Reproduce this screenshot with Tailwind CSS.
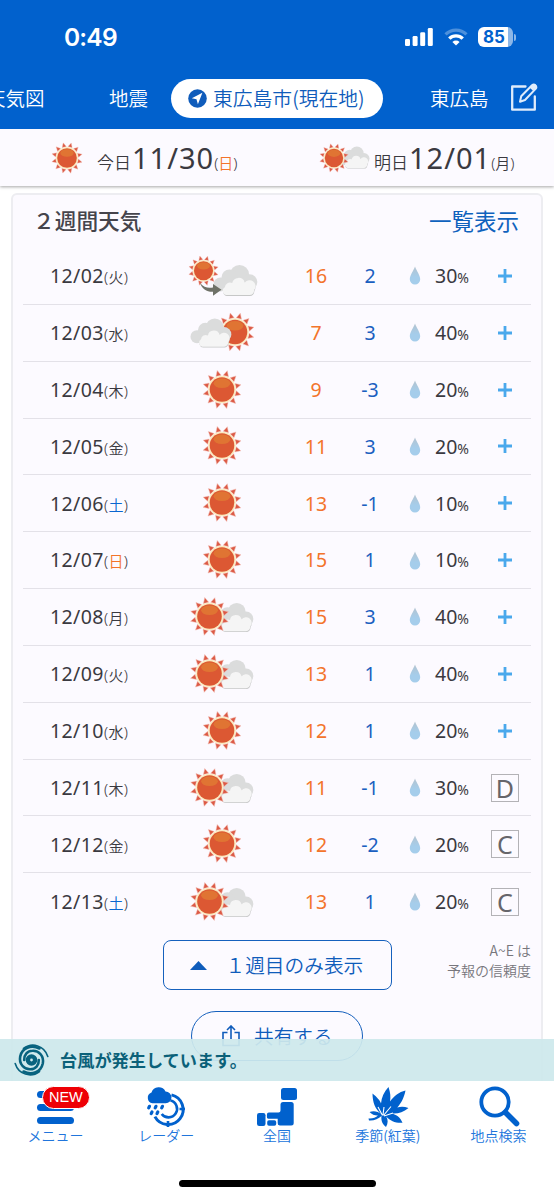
<!DOCTYPE html>
<html lang="ja">

<head>
    <meta charset="UTF-8">
    <meta name="viewport" content="width=device-width, initial-scale=1.0">
    <title>2週間天気</title>
    <script src="https://cdn.jsdelivr.net/npm/@tailwindcss/browser@4"></script>
    <style>
        body {
            font-family: 'Noto Sans', 'Noto Sans CJK JP', sans-serif;
        }

        .jp {
            font-family: 'Noto Sans CJK JP', sans-serif;
        }
    </style>
</head>

<body class="w-[554px] h-[1199px] overflow-hidden bg-white text-[#3a3940] flex flex-col">
    <!-- shared weather icons -->
    <svg class="absolute w-0 h-0">
        <defs>
            <linearGradient id="dropFill" x1="0" y1="0" x2="0" y2="1">
                <stop offset="0" stop-color="#b4c3cf" />
                <stop offset="0.6" stop-color="#a5cdeb" />
            </linearGradient>
        </defs>
        <symbol id="sun" viewBox="-20.5 -20.5 41 41">
            <g id="rays"></g>
            <circle r="14.2" fill="#fbeac0" />
            <circle r="12.6" fill="#dc5833" />
            <ellipse cy="-6.4" rx="8.6" ry="4.9" fill="#e07433" />
        </symbol>
        <symbol id="cloud" viewBox="0 0 45 32">
            <g fill="#dbdcdc">
                <circle cx="26.5" cy="10" r="9.6" />
                <circle cx="36.5" cy="17.5" r="7.8" />
                <circle cx="16.5" cy="13" r="8" />
                <circle cx="7.5" cy="20" r="7" />
                <path d="M7 14h30v12H7z" />
            </g>
            <path d="M14 31.5a4.2 4.2 0 0 1-1.8-7.8 5.2 5.2 0 0 1 7.4-4.2 6.5 6.5 0 0 1 12.6-.6 6 6 0 0 1 9.2 7.5c-.2 3.3-2 5.1-4.6 5.1z" fill="#c6c7c7" />
            <path d="M13.4 30.6a4.2 4.2 0 0 1-1.6-7.8 5.2 5.2 0 0 1 7.4-4.2 6.5 6.5 0 0 1 12.6-.6 6 6 0 0 1 9.4 7.5c-.2 3.3-2 5.1-4.6 5.1z" fill="#f5f5f5" />
        </symbol>
        <symbol id="drop" viewBox="0 0 12 19">
            <path d="M6 .5C7.6 5 11.2 9.3 11.2 13.3a5.2 5.2 0 0 1-10.4 0C.8 9.3 4.4 5 6 .5z" fill="url(#dropFill)" />
        </symbol>
    </svg>

    <header class="h-[129px] shrink-0 bg-[#0161cd] text-white flex flex-col overflow-hidden">
        <div class="h-[74px] pl-16 pr-[38px] flex items-center justify-between">
            <span class="text-[24.5px] leading-none font-semibold font-['Inter'] tracking-[-0.8px]">0:49</span>
            <div class="flex items-center">
                <svg class="w-7 h-[18px]" viewBox="0 0 28 18" fill="#fff">
                    <rect x="0" y="11" width="5" height="7" rx="1.3" />
                    <rect x="7.6" y="8" width="5" height="10" rx="1.3" />
                    <rect x="15.2" y="4.2" width="5" height="13.8" rx="1.3" />
                    <rect x="22.8" y="0" width="5" height="18" rx="1.3" />
                </svg>
                <svg class="w-6 h-[18px] ml-[11px] mr-[10px]" viewBox="0 0 24 18" fill="none" stroke="#fff">
                    <path d="M1.5 6.4a15 15 0 0 1 21 0" stroke-width="3.2" opacity=".3" />
                    <path d="M5.3 10.6a9.5 9.5 0 0 1 13.4 0" stroke-width="3.4" />
                    <path d="M12 17.6l-3.6-3.7a5.2 5.2 0 0 1 7.2 0z" fill="#fff" stroke="none" />
                </svg>
                <div class="w-[35px] h-5 rounded-md bg-[linear-gradient(90deg,#fff_87%,#8cb7e8_87%)] text-[#0161cd] font-['Inter'] font-bold text-[17px] leading-5 pl-[5px]">85</div>
                <div class="w-[2px] h-[7px] ml-[1px] rounded-r bg-[#8cb7e8]"></div>
            </div>
        </div>
        <div class="jp h-[48px] flex items-center text-[19.5px] leading-none whitespace-nowrap font-[350]">
            <span class="w-[109px] -ml-[14px] shrink-0">天気図</span>
            <span class="w-[75px] shrink-0 ml-[14px]">地震</span>
            <div class="w-[212px] h-[39px] -ml-[13px] rounded-full bg-white text-[#0f5cbb] text-[19.8px] flex items-center pl-[17px] gap-[6px] shrink-0">
                <svg class="w-[19px] h-[19px] shrink-0" viewBox="0 0 19 19">
                    <circle cx="9.5" cy="9.5" r="9.3" fill="#0f5cbb" />
                    <path d="M14.4 3.8L3.8 9.3l4.7.9 1.4 5.1z" fill="#fff" />
                </svg>
                <span>東広島市(現在地)</span>
            </div>
            <span class="w-[80px] ml-[47px] shrink-0">東広島</span>
            <svg class="w-[28px] h-[30px] shrink-0 mb-[3px]" viewBox="0 0 28 30" fill="none" stroke="#dfecfb" stroke-width="2.3">
                <path d="M15.5 4.5H2.2v23.2h22.6V14.5" stroke-linejoin="round" stroke-linecap="round" />
                <path d="M10 19.7l1.2-5.4L22 3.2c2.5-2 5.6 1.2 3.6 3.7L15 18z" stroke-linejoin="round" stroke-width="2" />
                <path d="M19.5 5.6l3.7-3.4c2-.9 4 1 3.3 3l-3.5 3.6z" fill="#dfecfb" stroke="none" />
            </svg>
        </div>
    </header>

    <main class="relative h-[952px] shrink-0 overflow-hidden bg-white">
        <section class="relative h-[57px] bg-[#fcfaff] shadow-[0_1px_3px_rgba(0,0,0,0.35)] grid grid-cols-2">
            <div class="flex items-center pl-[51px]">
                <svg class="w-8 h-8"><use href="#sun" /></svg>
                <p class="flex items-baseline ml-[14px] leading-none font-[350]">
                    <span class="text-[17px]">今日</span>
                    <span class="text-[29px] ml-[1px] font-normal tracking-[1px]">11/30</span>
                    <span class="text-[15px]">(<span class="text-[#f3742b]">日</span>)</span>
                </p>
            </div>
            <div class="flex items-center pl-[42px]">
                <div class="w-[51px] h-8 flex items-center">
                    <svg class="relative z-10 w-[30px] h-[30px] shrink-0"><use href="#sun" /></svg>
                    <svg class="w-8 h-[23px] -ml-[11px] shrink-0"><use href="#cloud" /></svg>
                </div>
                <p class="flex items-baseline ml-[4px] leading-none font-[350]">
                    <span class="text-[17px]">明日</span>
                    <span class="text-[29px] ml-[1px] font-normal tracking-[1px]">12/01</span>
                    <span class="text-[15px]">(月)</span>
                </p>
            </div>
        </section>

        <section class="mt-[7px] mx-[11px] h-[900px] rounded-md border-2 border-[#ededf1] bg-[#fcfaff] px-[10px]">
            <div class="jp h-[51px] mb-[2px] pl-[10px] pr-3 flex items-center justify-between leading-none">
                <h2 class="text-[21.7px] pb-[2px] font-medium text-[#45444c]">２週間天気</h2>
                <a class="text-[22.5px] pb-[1px] text-[#0f62bd]">一覧表示</a>
            </div>
            <div id="forecast"></div>
            <div class="relative flex justify-center pt-[10px]">
                <button class="jp w-[229px] h-[50px] border-[1.5px] border-[#1560bd] rounded-lg text-[#0f5cbb] text-[19.7px] leading-none font-[350] whitespace-nowrap flex items-center pl-[26px] gap-[19px]">
                    <svg class="w-[17px] h-[9px] shrink-0" viewBox="0 0 17 9"><path d="M0 9L8.5 0 17 9z" fill="#0f5cbb" /></svg>
                    １週目のみ表示
                </button>
                <p class="jp absolute right-0 top-[10px] text-right text-[14px] leading-[20px] text-[#77767c] font-[350]">A~E は<br>予報の信頼度</p>
            </div>
            <div class="flex justify-center mt-[21px]">
                <button class="jp w-[172px] h-[50px] border-[1.5px] border-[#1560bd] rounded-full text-[#0f5cbb] text-[19.7px] leading-none font-[350] flex items-center pl-[30px] gap-[14px]">
                    <svg class="w-[18px] h-[22px]" viewBox="0 0 18 22" fill="none" stroke="#0f5cbb" stroke-width="1.6">
                        <path d="M5.5 7.5H1v13h16v-13h-4.5M9 14V1.5M5 5l4-4 4 4" />
                    </svg>
                    共有する
                </button>
            </div>
        </section>

        <div class="absolute bottom-0 left-0 w-full h-[42px] bg-[#cee8ec]/93 flex items-center gap-[11px] pl-[14px]">
            <svg class="w-[35px] h-[34px]" viewBox="0 0 35 34" fill="none" stroke="#09637f" stroke-linecap="round">
                <circle cx="17.5" cy="17" r="3.6" stroke-width="4.4" />
                <g id="arm">
                    <path d="M33.8 13.5C30.5 2.5 18 -1 9.5 5.5" stroke-width="1.6" />
                    <path d="M25.5 5.5C17 1.5 8 5 6.2 13.5 4.8 21 10 26.5 16.500 26.200c5 0 8.500-4 8.300-9.200" stroke-width="2.600" />
                </g>
                <use href="#arm" transform="rotate(180 17.5 17)" />
            </svg>
            <p class="jp text-[17.2px] leading-none font-bold text-[#0b6179]">台風が発生しています。</p>
        </div>
    </main>

    <nav class="jp h-[118px] shrink-0 bg-white relative grid grid-cols-5 text-[14px] leading-none text-[#2075dc] font-[350]">
        <a class="flex flex-col items-center pt-[5px]">
            <div class="relative w-[37px] h-[42px] flex flex-col justify-center gap-[6px]">
                <div class="h-[7px] rounded-full bg-[#0161cd]"></div>
                <div class="h-[7px] rounded-full bg-[#0161cd]"></div>
                <div class="h-[7px] rounded-full bg-[#0161cd]"></div>
                <span class="absolute left-[5px] top-0 w-[48px] h-[23px] rounded-full border border-white bg-[#ee0005] text-white text-[14.5px] leading-[21px] text-center font-normal font-['Liberation_Sans']">NEW</span>
            </div>
            <span>メニュー</span>
        </a>
        <a class="flex flex-col items-center pt-[5px]">
            <svg class="w-[42px] h-[42px]" viewBox="0 0 42 42" fill="none" stroke="#0161cd">
                <path d="M26.5 8.9a15 15 0 1 1-16.6 21.7" stroke-width="3" />
                <path d="M25.5 14.6a8.5 8.5 0 1 1-8.8 13.3" stroke-width="2.6" />
                <path d="M34.5 23h5.5M23 35v6" stroke-width="2.6" />
                <path d="M7.5 17.3A5.6 5.6 0 0 1 6.5 6.5 7.6 7.6 0 0 1 20.5 5.5a5.9 5.9 0 0 1 .2 11.8z" fill="#0161cd" stroke="none" />
                <path d="M4.5 20.3l-.8 1.6M11 20.3l-.8 1.6M17.500 20.300l-.8 1.600M7 26l-.8 1.600M12.800 26l-.8 1.600" stroke-width="3.200" stroke-linecap="round" />
            </svg>
            <span>レーダー</span>
        </a>
        <a class="flex flex-col items-center pt-[5px]">
            <svg class="w-[42px] h-[42px]" viewBox="0 0 42 42" fill="#0161cd">
                <rect x="25" y="2" width="16" height="12" rx="2.5" />
                <path d="M27.5 16h7.7a2.5 2.5 0 0 1 2.5 2.5v18.500a2.500 2.500 0 0 1-2.500 2.500H23.700a2.300 2.300 0 0 1-2-2.500v-4.200h-9.200a1.600 1.600 0 0 1-1.600-1.800v-2.500a2 2 0 0 1 2-2h9.600a2 2 0 0 0 2-2v-6a2.500 2.500 0 0 1 3-2.500z" />
                <rect x="1" y="27" width="8.5" height="13" rx="2.2" />
                <rect x="11.2" y="34.2" width="9" height="5.6" rx="1.8" />
            </svg>
            <span>全国</span>
        </a>
        <a class="flex flex-col items-center pt-[5px]">
            <svg class="w-[42px] h-[42px]" viewBox="0 0 42 42" fill="#0161cd">
                <path d="M14.5 28.5C8 23 5.5 16 5.5 7.5c5 4 7.5 7 8.5 10C14.5 11 17 6 21.5 1c2 6 2.3 10 1.5 14.5C27 10 32 6 38.5 4.5c-1.5 7.5-4 12-8.200 17 3.500-1 7-1 11.200.5-5.500 4.500-10.500 6-17 5.500 5 1 9 4 11 9.300-7 .5-12-1.800-16.300-6.300 2 3 2 7-.2 10.500-4-3-5-7-4.500-11-3 3-8 5-12.500 4.500l-.5-2c4 .3 7.200-.8 9.500-3-2.500.3-6-.8-8.500-3.500 4.500-1.600 8.500-.5 12 2.500z" />
                <path d="M15.5 29.5L11 21M16 29l1-8M16.5 29.5L24 20.5M17 30l9-3" stroke="#fff" stroke-width="1.1" fill="none" />
            </svg>
            <span>季節(紅葉)</span>
        </a>
        <a class="flex flex-col items-center pt-[5px]">
            <svg class="w-[42px] h-[42px]" viewBox="0 0 42 42" fill="none" stroke="#0161cd">
                <circle cx="17" cy="16" r="13.7" stroke-width="3.8" />
                <path d="M27.5 26.5L38.5 37.5" stroke-width="5.6" stroke-linecap="round" />
            </svg>
            <span>地点検索</span>
        </a>
        <div class="absolute left-[179px] bottom-3 w-[197px] h-[7px] rounded-full bg-black"></div>
    </nav>

    <script>
        const days = [
            ['12/02', '火', 'later', 16, 2, 30, '+'],
            ['12/03', '水', 'cloudsun', 7, 3, 40, '+'],
            ['12/04', '木', 'sun', 9, -3, 20, '+'],
            ['12/05', '金', 'sun', 11, 3, 20, '+'],
            ['12/06', '土', 'sun', 13, -1, 10, '+'],
            ['12/07', '日', 'sun', 15, 1, 10, '+'],
            ['12/08', '月', 'suncloud', 15, 3, 40, '+'],
            ['12/09', '火', 'suncloud', 13, 1, 40, '+'],
            ['12/10', '水', 'sun', 12, 1, 20, '+'],
            ['12/11', '木', 'suncloud', 11, -1, 30, 'D'],
            ['12/12', '金', 'sun', 12, -2, 20, 'C'],
            ['12/13', '土', 'suncloud', 13, 1, 20, 'C'],
        ];

        const icons = {
            sun: '<use href="#sun" x="20" y="1.5" width="40" height="40" />',
            suncloud: '<use href="#cloud" x="30" y="7.5" width="42" height="30" /><use href="#sun" x="7.5" y="1.5" width="40" height="40" />',
            cloudsun: '<use href="#sun" x="33" y="1" width="40" height="40" /><use href="#cloud" x="8" y="7" width="42" height="30" />',
            later: '<use href="#cloud" x="31" y="10.5" width="45" height="32" /><use href="#sun" x="6" y="1.2" width="31" height="31" /><path d="M18 29c4 4.5 8 5.5 13 4.5V30l8.5 5.8-8.500 6v-4C24.500 38 20 35 18 29z" fill="#6f7268" />',
        };

        const dayColor = { '土': 'text-[#0a66d0]', '日': 'text-[#f3742b]' };

        // twelve rays around the disc
        let rays = '';
        for (let a = 15; a < 360; a += 30) {
            rays += `<path d="M.3-20L3-14.4h-5.600z" fill="#dc5a45" stroke="#f3c3bb" stroke-width=".5" transform="rotate(${a})" />`;
        }
        document.getElementById('rays').innerHTML = rays;

        document.getElementById('forecast').innerHTML = days.map(([date, day, icon, high, low, rain, mark], i) => `
            <div class="h-[56.85px] grid grid-cols-[132px_134px_54px_54px_36px_46px_52px] items-center text-[19.5px] leading-none ${i < days.length - 1 ? 'border-b-[1.5px] border-[#e3e1e8]' : ''}">
                <p class="pl-[27px] whitespace-nowrap tracking-[0.4px]">${date}<span class="text-[15px] font-[350]">(<span class="${dayColor[day] || ''}">${day}</span>)</span></p>
                <svg class="w-20 h-11 justify-self-center" viewBox="0 0 80 44">${icons[icon]}</svg>
                <span class="text-center text-[#f3742b]">${high}</span>
                <span class="text-center text-[#1a5fc0]">${low}</span>
                <svg class="w-3 h-[19px] justify-self-center"><use href="#drop" /></svg>
                <span class="text-right pr-[10px] whitespace-nowrap">${rain}<span class="text-[14px]">%</span></span>
                ${mark === '+'
                    ? '<svg class="w-[14px] h-[14px] justify-self-center" viewBox="0 0 14 14"><path d="M7 0v14M0 7h14" stroke="#4aa8ec" stroke-width="2.8" /></svg>'
                    : `<span class="w-7 h-7 justify-self-center border-[1.5px] border-[#b3b2b6] text-center text-[25px] leading-[26px] text-[#66656a]">${mark}</span>`}
            </div>`).join('');
    </script>
</body>

</html>
